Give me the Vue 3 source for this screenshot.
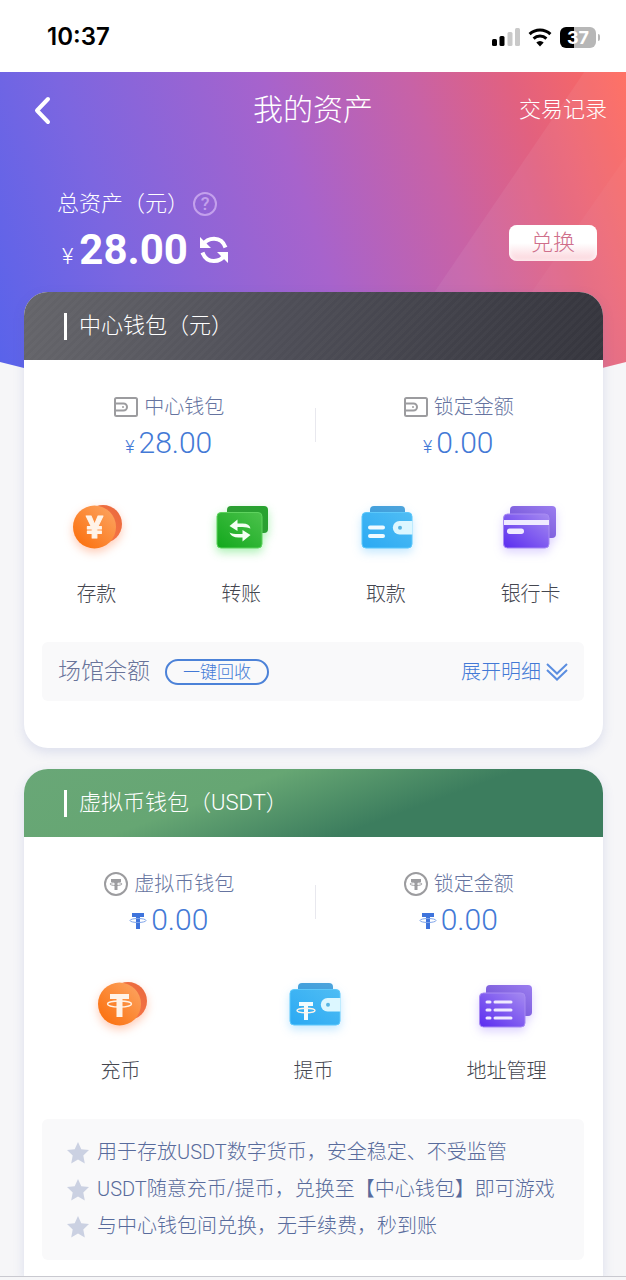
<template>
  <div class="page">
    <div class="status-bar">
      <span class="clock">10:37</span>
      <div class="status-icons">
        <svg class="signal" viewBox="0 0 28 20" aria-hidden="true">
          <rect x="0" y="12" width="5" height="7" rx="1.5" />
          <rect x="7.5" y="9" width="5" height="10" rx="1.5" />
          <rect class="off" x="15.5" y="5" width="5" height="14" rx="1.5" />
          <rect class="off" x="23" y="1" width="5" height="18" rx="1.5" />
        </svg>
        <svg class="wifi" viewBox="0 0 24 20" aria-hidden="true">
          <path d="M1.6 7.2a15 15 0 0 1 20.8 0" />
          <path d="M5.6 11.6a9.3 9.3 0 0 1 12.8 0" />
          <path class="dot" d="M12 19.4l-3.7-3.9a5.3 5.3 0 0 1 7.4 0z" />
        </svg>
        <div class="battery"><span>37</span></div>
      </div>
    </div>

    <header class="hero">
      <svg class="hero-shine" viewBox="0 0 200 300" preserveAspectRatio="none" aria-hidden="true">
        <path d="M158 0h42v300H-46z" />
        <path class="faint" d="M200 84v216H50z" />
      </svg>
      <nav class="nav">
        <button class="back" type="button" aria-label="返回">
          <svg viewBox="0 0 20 32"><path d="M16 5L5 16.5 16 28" /></svg>
        </button>
        <h1>我的资产</h1>
        <a class="records" href="#">交易记录</a>
      </nav>
      <div class="total">
        <div>
          <div class="total-label">
            <span>总资产（元）</span>
            <button class="help" type="button">?</button>
          </div>
          <div class="total-amount">
            <small>¥</small>
            <strong>28.00</strong>
            <button class="refresh" type="button" aria-label="刷新">
              <svg viewBox="0 0 30 30">
                <path d="M4.500 9.500C8 2.800 22 0 26.500 12.500M25.500 20C22 27 8 30 3.500 17.500" />
                <path class="head" d="M1 2v11h11zM29 28V17H18z" />
              </svg>
            </button>
          </div>
        </div>
        <button class="exchange" type="button">兑换</button>
      </div>
    </header>

    <main class="wallets">
      <section v-for="wallet in wallets" :key="wallet.id" class="card" :class="`card--${wallet.id}`">
        <h2 class="card-head">{{ wallet.title }}</h2>

        <div class="stats">
          <div v-for="stat in wallet.stats" :key="stat.label" class="stat">
            <div class="stat-label">
              <svg v-if="wallet.id === 'center'" viewBox="0 0 26 26" aria-hidden="true">
                <rect x="2" y="4" width="22" height="18" rx="1.5" />
                <path d="M2 9.5h8.500a3.500 3.500 0 0 1 0 7H2" />
                <circle class="solid" cx="10" cy="13" r="1" />
              </svg>
              <svg v-else viewBox="0 0 26 26" aria-hidden="true">
                <circle cx="13" cy="13" r="11" />
                <path class="solid" d="M8 8h10v3h-3.500v8h-3v-8H8z" />
                <ellipse class="ring" cx="13" cy="13" rx="6" ry="1.5" />
              </svg>
              <span>{{ stat.label }}</span>
            </div>
            <div class="stat-value">
              <small v-if="wallet.id === 'center'">¥</small>
              <svg v-else class="tether" viewBox="0 0 18 18" aria-hidden="true">
                <path d="M3 1h12v4h-4v12H7V5H3z" />
                <ellipse cx="9" cy="8.5" rx="8" ry="2" />
              </svg>
              <span>{{ stat.value }}</span>
            </div>
          </div>
        </div>

        <div class="actions">
          <button v-for="action in wallet.actions" :key="action.label" class="action" type="button">
            <svg class="action-icon" :class="`glow--${action.tone}`" viewBox="0 0 64 64" aria-hidden="true">
              <template v-if="action.tone === 'orange'">
                <circle cx="39" cy="29" r="19" fill="url(#orange-back)" />
                <circle cx="30.5" cy="32" r="21.5" fill="url(#orange-front)" />
                <text v-if="action.icon === 'yuan'" class="yuan" x="30.5" y="43">¥</text>
                <g v-else>
                  <path fill="#fff3e8" d="M21 22h19v5h-6.500v18h-6V27H21z" />
                  <ellipse class="coin-ring" cx="30.5" cy="32" rx="12" ry="3" />
                </g>
              </template>
              <template v-else-if="action.tone === 'green'">
                <rect x="18" y="11" width="41" height="27" rx="4" fill="url(#green-back)" />
                <rect x="8" y="17.5" width="45" height="35.5" rx="4" fill="url(#green-front)" stroke="#5ed35e" />
                <path
                  fill="#f4fff4"
                  d="M20.500 31l8-6.500v4h5q7 0 8 5-3-1.500-8-1.500h-5v4zM41.500 40l-8 6.500v-4h-4q-7 0-9-5 3 1.500 9 1.500h4v-4z"
                />
              </template>
              <template v-else-if="action.tone === 'blue'">
                <rect x="16" y="11" width="35" height="14" rx="4" fill="url(#blue-back)" />
                <rect x="8" y="17.5" width="50" height="35.5" rx="4" fill="url(#blue-front)" stroke="#5cc8fb" />
                <path fill="#dcf7ff" d="M58.500 26H45.500a6.700 6.700 0 0 0 0 13.400h13z" />
                <circle cx="46" cy="32.7" r="2" fill="#57b5e2" />
                <path v-if="action.icon === 'cash'" class="line" d="M16 32.500h13M16 41h13" />
                <g v-else>
                  <path fill="#f2fcff" d="M17 30h14v4h-5v14h-4V34h-5z" />
                  <ellipse class="coin-ring" cx="24" cy="38.5" rx="9" ry="2.3" />
                </g>
              </template>
              <template v-else-if="action.icon === 'card'">
                <rect x="11" y="11" width="46" height="32" rx="4" fill="url(#violet-back)" />
                <rect x="4.500" y="19" width="45.5" height="34" rx="4" fill="url(#violet-front)" stroke="#a78bf3" />
                <path fill="#efeaff" d="M5 25h45v5H5z" />
                <rect x="8" y="33.5" width="17" height="5.5" rx="2.7" fill="#efeaff" />
              </template>
              <template v-else>
                <rect x="11" y="13" width="46" height="31" rx="4" fill="url(#violet-back)" />
                <rect x="4.500" y="21" width="45.5" height="34" rx="4" fill="url(#violet-front)" stroke="#a78bf3" />
                <path class="list" d="M12 30h3M20 30h16M12 38h3M20 38h16M12 46h3M20 46h16" />
              </template>
            </svg>
            <span>{{ action.label }}</span>
          </button>
        </div>

        <div v-if="wallet.id === 'center'" class="venue">
          <span class="venue-title">场馆余额</span>
          <button class="recover" type="button">一键回收</button>
          <button class="expand" type="button">
            <span>展开明细</span>
            <svg viewBox="0 0 22 20" aria-hidden="true"><path d="M1 2l10 9.500L21 2M1 8l10 9.500L21 8" /></svg>
          </button>
        </div>

        <ul v-else class="tips">
          <li v-for="tip in tips" :key="tip">
            <svg viewBox="0 0 24 24" aria-hidden="true">
              <path d="M12 1l3.300 7.200 7.700.9-5.700 5.400 1.500 7.900L12 18.500l-6.800 3.900 1.500-7.900L1 9.100l7.700-.9z" />
            </svg>
            <span>{{ tip }}</span>
          </li>
        </ul>
      </section>
    </main>

    <div class="bottom-edge"></div>

    <svg class="defs" aria-hidden="true">
      <defs>
        <linearGradient v-for="g in gradients" :id="g.id" :key="g.id" x1="0" y1="1" x2="1" y2="0">
          <stop offset="0" :stop-color="g.from" />
          <stop offset="1" :stop-color="g.to" />
        </linearGradient>
      </defs>
    </svg>
  </div>
</template>

<script setup>
const wallets = [
  {
    id: 'center',
    title: '中心钱包（元）',
    stats: [
      { label: '中心钱包', value: '28.00' },
      { label: '锁定金额', value: '0.00' },
    ],
    actions: [
      { label: '存款', tone: 'orange', icon: 'yuan' },
      { label: '转账', tone: 'green', icon: 'transfer' },
      { label: '取款', tone: 'blue', icon: 'cash' },
      { label: '银行卡', tone: 'violet', icon: 'card' },
    ],
  },
  {
    id: 'usdt',
    title: '虚拟币钱包（USDT）',
    stats: [
      { label: '虚拟币钱包', value: '0.00' },
      { label: '锁定金额', value: '0.00' },
    ],
    actions: [
      { label: '充币', tone: 'orange', icon: 'tether' },
      { label: '提币', tone: 'blue', icon: 'tether' },
      { label: '地址管理', tone: 'violet', icon: 'list' },
    ],
  },
]

const tips = [
  '用于存放USDT数字货币，安全稳定、不受监管',
  'USDT随意充币/提币，兑换至【中心钱包】即可游戏',
  '与中心钱包间兑换，无手续费，秒到账',
]

const gradients = [
  { id: 'orange-back', from: '#ff7a4a', to: '#e8683c' },
  { id: 'orange-front', from: '#fb6b06', to: '#fca766' },
  { id: 'green-back', from: '#2f9a35', to: '#27a32f' },
  { id: 'green-front', from: '#12a81c', to: '#4cc24c' },
  { id: 'blue-back', from: '#3a9ddc', to: '#4da4dc' },
  { id: 'blue-front', from: '#2ba9f3', to: '#4fbdf4' },
  { id: 'violet-back', from: '#6a4bd0', to: '#9b7df0' },
  { id: 'violet-front', from: '#5a2cf0', to: '#a58af0' },
]
</script>

<style>
body {
  margin: 0;
}
</style>

<style scoped>
.page {
  display: flex;
  flex-direction: column;
  min-height: 100vh;
  background: #f6f6f8;
  color: #44464f;
  font-family: Roboto, "Noto Sans CJK SC", sans-serif;
  font-size: 20px;
  font-weight: 300;
  line-height: 1.2;
}

button {
  padding: 0;
  border: 0;
  background: none;
  color: inherit;
  font: inherit;
  cursor: pointer;
}

svg {
  flex-shrink: 0;
}

h1,
h2 {
  margin: 0;
  font-weight: 300;
}

/* status bar */
.status-bar {
  display: flex;
  align-items: center;
  justify-content: space-between;
  height: 72px;
  padding: 2px 26px 0 47px;
  box-sizing: border-box;
  background: #fff;
}

.clock {
  color: #000;
  font-family: Inter, sans-serif;
  font-size: 24px;
  font-weight: 600;
}

.status-icons {
  display: flex;
  align-items: center;
  gap: 8px;
}

.signal {
  width: 28px;
  height: 20px;
}

.signal .off {
  fill: #c9c9c9;
}

.wifi {
  width: 24px;
  height: 20px;
  fill: none;
  stroke: #000;
  stroke-width: 3;
}

.wifi .dot {
  fill: #000;
  stroke: none;
}

.battery {
  position: relative;
  width: 36px;
  height: 21px;
  margin-right: 4px;
  border-radius: 6px;
  background: linear-gradient(90deg, #000 38%, #b7b7b7 38%);
  color: #fff;
  font-family: Inter, sans-serif;
  font-size: 18px;
  font-weight: 700;
  line-height: 21px;
  text-align: center;
}

.battery::after {
  content: "";
  position: absolute;
  top: 7px;
  right: -4px;
  width: 2px;
  height: 7px;
  border-radius: 0 3px 3px 0;
  background: #b7b7b7;
}

/* hero */
.hero {
  position: relative;
  height: 320px;
  background: linear-gradient(72deg, #5763eb 0%, #7c66e0 22%, #a763cc 50%, #c862a6 70%, #e2617f 84%, #ff6a5c 100%);
  clip-path: polygon(0 0, 100% 0, 100% 290px, calc(100% - 120px) 100%, 120px 100%, 0 290px);
  color: #fff;
}

.hero-shine {
  position: absolute;
  top: 0;
  right: 0;
  width: 32%;
  height: 300px;
  overflow: visible;
  fill: #fff;
  fill-opacity: 0.06;
}

.hero-shine .faint {
  fill-opacity: 0.03;
}

.nav {
  position: relative;
  display: grid;
  grid-template-columns: 1fr auto 1fr;
  align-items: center;
  height: 76px;
  padding: 0 19px;
}

.nav h1 {
  font-size: 30px;
}

.back {
  justify-self: start;
  display: flex;
  margin-left: 13px;
}

.back svg {
  width: 20px;
  height: 32px;
  fill: none;
  stroke: #fff;
  stroke-width: 4;
  stroke-linecap: round;
  stroke-linejoin: round;
}

.records {
  justify-self: end;
  color: #fff;
  font-size: 22px;
  text-decoration: none;
}

.total {
  position: relative;
  display: flex;
  align-items: center;
  justify-content: space-between;
  padding: 38px 29px 0 57px;
}

.total-label {
  display: flex;
  align-items: center;
  gap: 4px;
  height: 36px;
  font-size: 22px;
}

.help {
  width: 24px;
  height: 24px;
  border: 2px solid #c3a0ec;
  border-radius: 50%;
  color: #c3a0ec;
  font-size: 18px;
  font-weight: 500;
  line-height: 20px;
}

.total-amount {
  display: flex;
  align-items: baseline;
  gap: 6px;
  height: 56px;
  padding-left: 5px;
  line-height: 56px;
}

.total-amount small {
  font-size: 22px;
}

.total-amount strong {
  font-size: 42px;
  font-weight: 700;
}

.refresh {
  align-self: center;
  display: flex;
  margin-left: 5px;
}

.refresh svg {
  width: 30px;
  height: 30px;
  fill: none;
  stroke: #fff;
  stroke-width: 4;
}

.refresh .head {
  fill: #fff;
  stroke: none;
}

.exchange {
  width: 88px;
  height: 36px;
  margin-top: 22px;
  border-radius: 8px;
  background: linear-gradient(180deg, #fff 50%, #fbd3da 100%);
  box-shadow: inset 0 0 5px #fff;
  color: #cf6f8b;
  font-size: 22px;
  line-height: 34px;
}

/* wallets */
.wallets {
  position: relative;
  display: flex;
  flex: 1;
  flex-direction: column;
  gap: 21px;
  margin-top: -100px;
  padding: 0 23px 0 24px;
}

.card {
  border-radius: 24px;
  background: #fff;
  box-shadow: 0 4px 12px rgba(80, 100, 180, 0.16);
}

.card--center {
  padding-bottom: 47px;
}

.card--usdt {
  flex: 1;
  padding-bottom: 16px;
  border-radius: 24px 24px 0 0;
}

.card-head {
  display: flex;
  align-items: center;
  gap: 12px;
  height: 68px;
  padding-left: 40px;
  border-radius: 24px 24px 0 0;
  color: #fff;
  font-size: 22px;
}

.card-head::before {
  content: "";
  width: 3px;
  height: 27px;
  background: #fff;
}

.card--center .card-head {
  background:
    repeating-linear-gradient(135deg, rgba(255, 255, 255, 0.02) 0 3px, transparent 3px 6px),
    linear-gradient(100deg, #65656a, #4e4e57 45%, #35353d);
}

.card--usdt .card-head {
  background: linear-gradient(160deg, #69a777 0%, #66a673 35%, #3c7d5e 65%);
}

.stats {
  display: flex;
  padding-top: 34px;
}

.stat {
  position: relative;
  flex: 1;
}

.stat + .stat::before {
  content: "";
  position: absolute;
  top: 14px;
  left: 1px;
  height: 34px;
  border-left: 1px solid #e8e8ee;
}

.stat-label,
.stat-value {
  display: flex;
  justify-content: center;
}

.stat-label {
  align-items: center;
  gap: 5px;
  height: 26px;
  color: #6674a0;
}

.stat-label svg {
  width: 26px;
  height: 26px;
  fill: none;
  stroke: #9c9c9f;
  stroke-width: 2;
}

.stat-label .solid {
  fill: #9c9c9f;
  stroke: none;
}

.stat-label .ring {
  stroke-width: 1;
}

.stat-value {
  align-items: baseline;
  gap: 4px;
  height: 36px;
  margin-top: 5px;
  color: #4379d6;
  font-size: 30px;
  line-height: 36px;
}

.stat-value small {
  font-size: 18px;
}

.tether {
  width: 18px;
  height: 18px;
}

.tether path {
  fill: #3f74dc;
}

.tether ellipse {
  fill: none;
  stroke: #7fa5ea;
}

.actions {
  display: flex;
  padding-top: 34px;
}

.action {
  display: flex;
  flex: 1;
  flex-direction: column;
  align-items: center;
  gap: 21px;
  line-height: 28px;
}

.action-icon {
  width: 64px;
  height: 64px;
  overflow: visible;
}

.glow--orange {
  filter: drop-shadow(0 4px 5px rgba(255, 110, 50, 0.35));
}

.glow--green {
  filter: drop-shadow(0 4px 5px rgba(50, 220, 70, 0.4));
}

.glow--blue {
  filter: drop-shadow(0 4px 5px rgba(60, 180, 255, 0.3));
}

.glow--violet {
  filter: drop-shadow(0 4px 5px rgba(120, 80, 255, 0.25));
}

.yuan {
  fill: #fff3e8;
  stroke: #fff3e8;
  stroke-linejoin: round;
  font-size: 32px;
  font-weight: 700;
  text-anchor: middle;
}

.coin-ring {
  fill: none;
  stroke: #fff3e8;
  stroke-width: 1.4;
}

.line,
.list {
  stroke: #effaff;
  stroke-width: 4;
  stroke-linecap: round;
}

.list {
  stroke: #efeaff;
  stroke-width: 3;
}

/* venue balance */
.venue,
.tips {
  margin: 34px 19px 0 18px;
  border-radius: 6px;
  background: #f9f9fa;
}

.venue {
  display: flex;
  align-items: center;
  height: 59px;
  padding: 0 16px;
}

.venue-title {
  color: #69749a;
  font-size: 23px;
}

.recover {
  height: 26px;
  margin-left: 15px;
  padding: 0 16px;
  border: 2px solid #4c82d8;
  border-radius: 13px;
  color: #4379d6;
  font-size: 17px;
  line-height: 22px;
}

.expand {
  display: flex;
  align-items: center;
  gap: 5px;
  margin-left: auto;
  color: #4379d6;
}

.expand svg {
  width: 22px;
  height: 20px;
  fill: none;
  stroke: #5b8ee0;
  stroke-width: 2;
}

.tips {
  padding: 15px 24px;
  color: #586b9c;
  list-style: none;
}

.tips li {
  display: flex;
  align-items: center;
  gap: 7px;
  line-height: 37px;
}

.tips svg {
  width: 24px;
  height: 24px;
  fill: #cbd1e2;
}

.bottom-edge {
  position: relative;
  height: 3px;
  border-top: 1px solid #c9c9d0;
  background: #f6f6f8;
}

.defs {
  position: absolute;
  width: 0;
  height: 0;
}
</style>
